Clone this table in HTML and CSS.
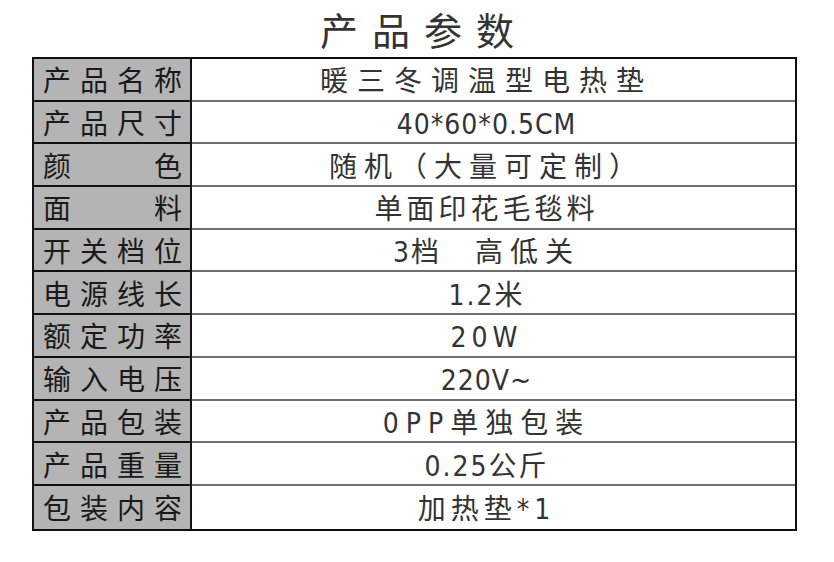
FILE: index.html
```html
<!DOCTYPE html>
<html lang="zh-CN">
<head>
<meta charset="utf-8">
<title>产品参数</title>
<link rel="stylesheet" href="styles.css">
</head>
<body>
<div class="page">
  <h1 class="title">产品参数</h1>
  <div class="spec">
    <div class="row"><div class="label"><span>产</span><span>品</span><span>名</span><span>称</span></div><div class="value ls9">暖三冬调温型电热垫</div></div>
    <div class="row"><div class="label"><span>产</span><span>品</span><span>尺</span><span>寸</span></div><div class="value ls1">40*60*0.5CM</div></div>
    <div class="row"><div class="label"><span>颜</span><span>色</span></div><div class="value ls7">随机（大量可定制）</div></div>
    <div class="row"><div class="label"><span>面</span><span>料</span></div><div class="value ls4">单面印花毛毯料</div></div>
    <div class="row"><div class="label"><span>开</span><span>关</span><span>档</span><span>位</span></div><div class="value"><span class="ls2">3档</span><span class="gap"></span><span class="ls7">高低关</span></div></div>
    <div class="row"><div class="label"><span>电</span><span>源</span><span>线</span><span>长</span></div><div class="value ls2">1.2米</div></div>
    <div class="row"><div class="label"><span>额</span><span>定</span><span>功</span><span>率</span></div><div class="value ls5">20W</div></div>
    <div class="row"><div class="label"><span>输</span><span>入</span><span>电</span><span>压</span></div><div class="value ls1">220V~</div></div>
    <div class="row"><div class="label"><span>产</span><span>品</span><span>包</span><span>装</span></div><div class="value ls7">0PP单独包装</div></div>
    <div class="row"><div class="label"><span>产</span><span>品</span><span>重</span><span>量</span></div><div class="value ls2">0.25公斤</div></div>
    <div class="row"><div class="label"><span>包</span><span>装</span><span>内</span><span>容</span></div><div class="value ls5">加热垫*1</div></div>
  </div>
</div>
</body>
</html>
```

FILE: styles.css
```css
html, body {
  margin: 0;
  padding: 0;
  background: #ffffff;
}

.page {
  width: 834px;
  height: 562px;
  padding: 0 0 0 32px;
  box-sizing: border-box;
  font-family: "Noto Sans CJK SC", "Noto Sans", sans-serif;
}

.title {
  margin: 0;
  height: 57px;
  width: 770px;
  display: flex;
  align-items: center;
  justify-content: center;
  font-size: 38px;
  font-weight: 400;
  letter-spacing: 14px;
  text-indent: 14px;
  color: #333333;
  line-height: 1;
}

.spec {
  width: 765px;
  box-sizing: border-box;
  border: 2px solid #111111;
}

.row {
  display: grid;
  grid-template-columns: 158px 1fr;
  height: 42.7px;
}

.label {
  background: #b4b4b4;
  border-right: 2px solid #111111;
  border-bottom: 2px solid #111111;
  display: flex;
  align-items: center;
  justify-content: space-between;
  padding: 0 8px 0 9px;
  font-size: 28px;
  line-height: 1;
  color: #1a1a1a;
}

.value {
  border-bottom: 2px solid #6e6e6e;
  display: flex;
  align-items: center;
  justify-content: center;
  font-family: "DejaVu Sans Condensed", "Liberation Sans Narrow", "Noto Sans CJK SC", sans-serif;
  font-stretch: condensed;
  font-size: 28px;
  line-height: 1;
  color: #333333;
  padding: 6px 14px 0 0;
  box-sizing: border-box;
  white-space: pre;
}

.row:last-child .label,
.row:last-child .value {
  border-bottom: none;
}

.ls1 { letter-spacing: 1px; }
.ls2 { letter-spacing: 2px; }
.ls4 { letter-spacing: 4px; }
.ls5 { letter-spacing: 5px; }
.ls6 { letter-spacing: 6px; }
.ls7 { letter-spacing: 7px; }
.ls8 { letter-spacing: 8px; }
.ls9 { letter-spacing: 9px; }

.gap {
  display: inline-block;
  width: 34px;
}
```
